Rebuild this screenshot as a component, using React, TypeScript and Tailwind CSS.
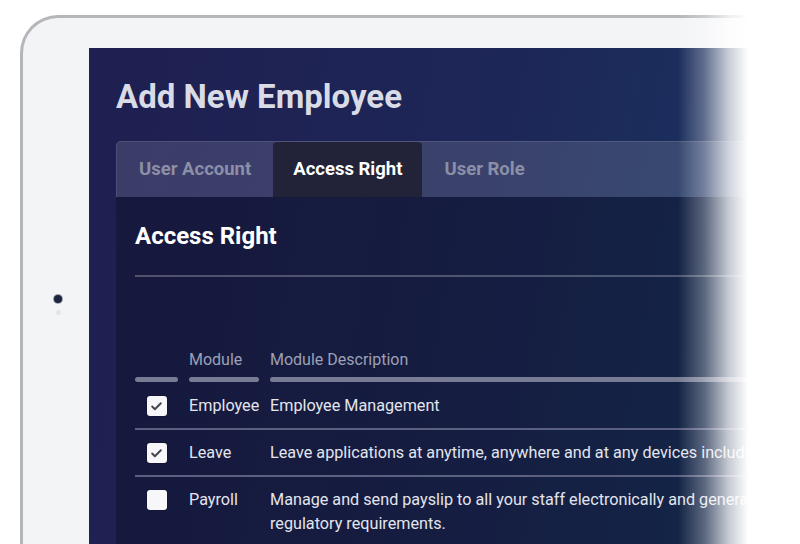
import { Check } from 'lucide-react'

const rows = [
  { checked: true, module: 'Employee', desc: ['Employee Management'] },
  {
    checked: true,
    module: 'Leave',
    desc: ['Leave applications at anytime, anywhere and at any devices including mobile phones.'],
  },
  {
    checked: false,
    module: 'Payroll',
    desc: [
      'Manage and send payslip to all your staff electronically and generate reports that comply with',
      'regulatory requirements.',
    ],
  },
]

function Checkbox({ checked }: { checked: boolean }) {
  return (
    <div className="w-[20px] h-[20px] rounded-[3px] bg-[#f7f7f9] flex items-center justify-center shadow-[0_0_0_1px_rgba(0,0,0,0.15)]">
      {checked && <Check size={13} strokeWidth={3.6} className="text-[#44454f]" />}
    </div>
  )
}

export default function App() {
  return (
    <div className="relative w-[800px] h-[544px] overflow-hidden bg-white font-['Roboto',sans-serif]">
      {/* tablet */}
      <div className="ml-[20px] mt-[15px] w-[800px] h-[560px] flex rounded-tl-[38px] border-l-[3px] border-t-[3px] border-[#b4b6ba] bg-[#f3f4f6]">
        {/* bezel left, camera */}
        <div className="w-[66px] shrink-0 flex flex-col items-center pl-[4px] pt-[277px]">
          <div className="w-[8px] h-[8px] rounded-full bg-[#1c2540] ring-1 ring-[#9aa0ad]" />
          <div className="mt-[7px] w-[5px] h-[5px] rounded-full bg-[#e4e5e8]" />
        </div>

        {/* screen */}
        <div className="flex-1 mt-[30px] pl-[27px] pt-[30px] bg-[linear-gradient(100deg,#1f1f51_0%,#1d2757_45%,#173a66_100%)]">
          <h1 className="text-[33px] leading-[38px] font-bold text-[#d9dce6]">Add New Employee</h1>

          {/* tabs */}
          <div className="mt-[25px] h-[56px] flex rounded-tl-[5px] border-t border-l border-white/10 bg-white/[0.13]">
            <div className="px-[22px] flex items-center text-[18.5px] font-bold text-[#8b8fa8]">User Account</div>
            <div className="px-[20px] flex items-center text-[18.5px] font-bold text-white bg-[#222338] rounded-t-[4px]">
              Access Right
            </div>
            <div className="px-[22px] flex items-center text-[18.5px] font-bold text-[#8b8fa8]">User Role</div>
          </div>

          {/* panel */}
          <div className="h-[400px] bg-black/25 pl-[19px] pt-[25px]">
            <h2 className="text-[24px] leading-[29px] font-bold text-white">Access Right</h2>
            <div className="mt-[24px] h-[2px] bg-white/25" />

            <div className="mt-[71px] flex gap-[11px] text-[16px] leading-6 text-[#9ca1b6]">
              <div className="w-[43px] shrink-0" />
              <div className="w-[70px] shrink-0">Module</div>
              <div className="flex-1">Module Description</div>
            </div>
            <div className="mt-[5px] flex gap-[11px]">
              <div className="w-[43px] h-[5px] rounded-full bg-[#777c94]" />
              <div className="w-[70px] h-[5px] rounded-full bg-[#777c94]" />
              <div className="flex-1 h-[5px] rounded-full bg-[#777c94]" />
            </div>

            <div className="mt-[1px]">
              {rows.map((r) => (
                <div
                  key={r.module}
                  className="flex gap-[11px] pt-[11px] pb-[10px] border-b-2 border-[#5b6080] text-[16.2px] leading-6 text-[#e3e5ee]"
                >
                  <div className="w-[43px] shrink-0 flex justify-center pt-[2px]">
                    <Checkbox checked={r.checked} />
                  </div>
                  <div className="w-[70px] shrink-0">{r.module}</div>
                  <div className="flex-1 whitespace-nowrap">
                    {r.desc.map((d) => (
                      <div key={d}>{d}</div>
                    ))}
                  </div>
                </div>
              ))}
            </div>
          </div>
        </div>
      </div>

      {/* right side fade */}
      <div className="absolute top-0 bottom-0 left-[678px] w-[122px] bg-[linear-gradient(to_right,rgba(255,255,255,0)_0px,rgba(255,255,255,0.3)_26px,rgba(255,255,255,0.75)_50px,#fff_70px)]" />
    </div>
  )
}
